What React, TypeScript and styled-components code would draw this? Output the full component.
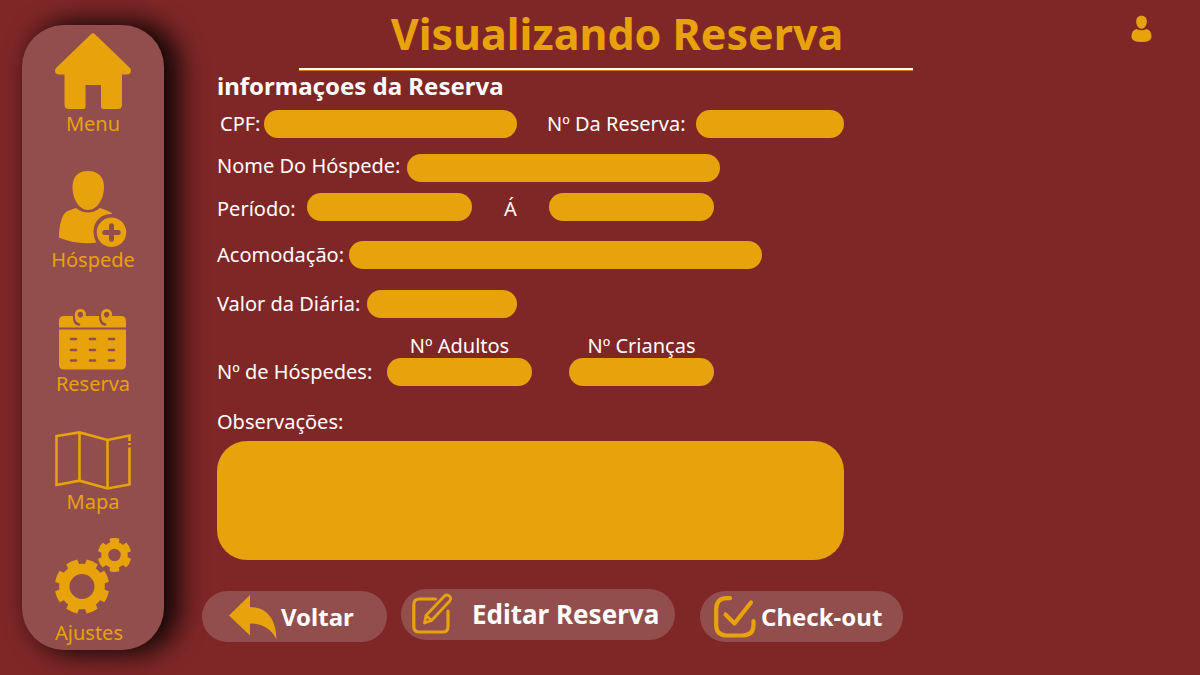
import React from "react";
import styled, { createGlobalStyle } from "styled-components";

const gold = "#e8a20c";
const wine = "#7f2727";
const rose = "#914e4c";

const GlobalStyle = createGlobalStyle`
  *, *::before, *::after { box-sizing: border-box; }
  body { margin: 0; background: ${wine}; }
  body, button, input, textarea { font-family: "Noto Sans", "Open Sans", sans-serif; }
`;

const Page = styled.div`
  display: flex;
  align-items: flex-start;
  min-height: 100vh;
  padding: 0 22px;
  color: #fff;
`;

const Sidebar = styled.nav`
  flex: 0 0 142px;
  display: flex;
  flex-direction: column;
  align-items: center;
  margin: 25px 0;
  padding: 8px 0 5px;
  border-radius: 42px;
  background: ${rose};
  box-shadow: 12px 0 26px 4px rgba(0, 0, 0, 0.85);
`;

const NavLink = styled.a<{ $above?: number; $gap?: number; $align?: string }>`
  display: flex;
  flex-direction: column;
  align-items: ${(p) => p.$align ?? "center"};
  gap: ${(p) => p.$gap ?? 0}px;
  margin-top: ${(p) => p.$above ?? 0}px;
  color: ${gold};
  font-size: 20px;
  line-height: 24px;
  text-decoration: none;

  svg { display: block; }
`;

const Main = styled.main`
  flex: 1;
  min-width: 0;
  padding-left: 38px;
`;

const Header = styled.header`
  display: flex;
  justify-content: space-between;
  align-items: flex-start;
`;

const Title = styled.h1`
  flex: 0 1 614px;
  margin: 0 0 0 97px;
  padding: 4px 0 4px 22px;
  border-bottom: 2px solid #fff;
  box-shadow: 0 1px 0 #e07a1c;
  font-size: 43px;
  line-height: 60px;
  font-weight: 700;
  text-align: center;
  white-space: nowrap;
  color: ${gold};
`;

const UserButton = styled.button`
  margin: 15px 26px 0 0;
  padding: 0;
  border: 0;
  background: none;
  color: ${gold};
  svg { display: block; }
`;

const Form = styled.form`
  max-width: 642px;
  padding-left: 15px;
`;

const SectionTitle = styled.h2`
  margin: 0 0 8px;
  font-size: 24px;
  line-height: 32px;
  font-weight: 700;
`;

const Row = styled.div<{ $above?: number; $align?: string }>`
  display: flex;
  align-items: ${(p) => p.$align ?? "center"};
  margin-top: ${(p) => p.$above ?? 0}px;
`;

const Label = styled.label<{ $width?: number; $indent?: number }>`
  flex: none;
  width: ${(p) => (p.$width ? p.$width + "px" : "auto")};
  padding-left: ${(p) => p.$indent ?? 0}px;
  font-size: 20px;
  line-height: 24px;
  white-space: nowrap;
`;

const GroupName = styled.span`
  flex: none;
  width: 170px;
  font-size: 20px;
  line-height: 28px;
  white-space: nowrap;
`;

const Pill = styled.input<{ $width: number }>`
  width: ${(p) => p.$width}px;
  min-width: 0;
  height: 28px;
  padding: 0 14px;
  border: 0;
  border-radius: 14px;
  background: ${gold};
  color: #fff;
  font-size: 16px;
`;

const Group = styled.div`
  display: flex;
  gap: 37px;
`;

const Stack = styled.div`
  display: flex;
  flex-direction: column;
  align-items: center;
  min-width: 0;
`;

const Notes = styled.textarea`
  display: block;
  width: 100%;
  height: 119px;
  margin-top: 7px;
  padding: 16px 24px;
  border: 0;
  border-radius: 30px;
  background: ${gold};
  color: #fff;
  font-size: 16px;
  resize: none;
`;

const Actions = styled.div`
  display: flex;
  align-items: flex-end;
  height: 53px;
  margin-top: 29px;
`;

const Action = styled.button<{ $width: number; $before?: number; $gap: number; $left: number }>`
  display: flex;
  align-items: center;
  gap: ${(p) => p.$gap}px;
  width: ${(p) => p.$width}px;
  height: 51px;
  margin-left: ${(p) => p.$before ?? 0}px;
  padding: 0 0 0 ${(p) => p.$left}px;
  border: 0;
  border-radius: 26px;
  background: ${rose};
  color: #fff;
  font-size: 24px;
  line-height: 32px;
  font-weight: 700;
  white-space: nowrap;

  svg {
    flex: none;
    color: ${gold};
  }
`;

const MainAction = styled(Action)`
  align-self: flex-start;
  padding-bottom: 2px;
  font-size: 26px;
`;

const HomeIcon = () => (
  <svg width="76" height="76" viewBox="0 0 76 76" fill="currentColor" aria-hidden="true">
    <path d="M36 1.200Q38-.8 40 1.200L75 35Q77 38 75 40.500Q74 41.500 72 41.500H67V71.500Q67 76 62.500 76H48Q46 76 46 74V52H30.500V74Q30.500 76 28.500 76H14Q9.500 76 9.500 71.500V41.500H4Q2 41.500 1 40.500Q-1 38 1 35Z" />
  </svg>
);

const GuestIcon = () => (
  <svg width="68" height="77" viewBox="0 0 68 77" fill="currentColor" aria-hidden="true">
    <path d="M29 0C39 0 45 6 45 16C45 28 38 39 29 39S13.500 28 13.500 16C13.500 6 19 0 29 0Z" />
    <path d="M17 37Q29 46 41 37L49 40Q52 41 53.500 43C42 42.500 35 50 34.500 60Q34.500 67 37.500 71.500C24 73.500 10 71 0 66.500C0 54 3 44 7 41Q9 39.500 17 37Z" />
    <path fillRule="evenodd" d="M52.500 46.500a14.800 14.800 0 1 0 .01 0ZM52.500 52.200q2.500 0 2.500 2.500v4.300h4.200q2.500 0 2.500 2.500t-2.500 2.500h-4.200v4.300q0 2.500-2.500 2.500t-2.500-2.500v-4.300h-4.200q-2.500 0-2.500-2.500t2.500-2.500h4.200v-4.300q0-2.500 2.500-2.500Z" />
  </svg>
);

const CalendarIcon = () => (
  <svg width="68" height="61" viewBox="0 0 68 61" aria-hidden="true">
    <path fill="currentColor" d="M5 7H62Q67 7 67 12V18.500H0V12Q0 7 5 7ZM0 20.500H67V55.500Q67 60.500 62 60.500H5Q0 60.500 0 55.500Z" />
    <g fill="none" strokeLinecap="round">
      {[0, 26.2].map((x) => (
        <g key={x} transform={`translate(${x} 0)`}>
          <path stroke={rose} strokeWidth="2.600" d="M15.200 6.500C14.800 12.500 16.500 15 20 15.500" />
          <path stroke="currentColor" strokeWidth="2.800" d="M18.500 11.500C17 9.500 17.300 7.500 17.300 5.500C17.500 0 25.500 0 25.500 5.500V8" />
          <path stroke={rose} strokeWidth="4" d="M21.400 5V6.800" />
        </g>
      ))}
      {[30, 41, 51.5].map((y) => (
        <path key={y} stroke={rose} strokeWidth="2.600" d={`M12 ${y}h5M31 ${y}h5M50 ${y}h5`} />
      ))}
    </g>
  </svg>
);

const MapIcon = () => (
  <svg width="76" height="59" viewBox="0 0 76 59" fill="none" stroke="currentColor" strokeWidth="2.600" aria-hidden="true">
    <path d="M74.500 10V4.500L52.500 9L24.500 1.400L1.500 5V54L24.500 49.700L52.500 57.500L74.500 53.500V16.500M24.500 1.400V49.700M52.500 9V57.500M74.500 12V14" />
  </svg>
);

const gear = (cx: number, cy: number, outer: number, inner: number, teeth: number, turn: number) => {
  const step = (Math.PI * 2) / teeth;
  const at = (r: number, a: number) =>
    `${(cx + r * Math.cos(a)).toFixed(2)} ${(cy + r * Math.sin(a)).toFixed(2)}`;
  let d = "";
  for (let i = 0; i < teeth; i++) {
    const a = turn + i * step;
    d += `${i ? "L" : "M"}${at(inner, a - step * 0.33)}L${at(outer, a - step * 0.28)}`;
    d += `A${outer} ${outer} 0 0 1 ${at(outer, a + step * 0.28)}L${at(inner, a + step * 0.33)}`;
    d += `A${inner} ${inner} 0 0 1 ${at(inner, a + step * 0.67)}`;
  }
  return d + "Z";
};

const hole = (cx: number, cy: number, r: number) =>
  `M${cx - r} ${cy}a${r} ${r} 0 1 0 ${2 * r} 0a${r} ${r} 0 1 0 ${-2 * r} 0Z`;

const GearsIcon = () => (
  <svg width="76" height="76" viewBox="0 0 76 76" fill="currentColor" fillRule="evenodd" aria-hidden="true">
    <path d={gear(27, 48.5, 27.3, 22.8, 8, Math.PI / 8) + hole(27, 48.5, 12.5)} />
    <path d={gear(59.5, 17, 17, 13.2, 6, Math.PI / 2) + hole(59.5, 17, 6.2)} />
  </svg>
);

const UserIcon = () => (
  <svg width="21" height="27" viewBox="0 0 21 27" fill="currentColor" aria-hidden="true">
    <path d="M10.500 .8C14 .8 15.800 3 15.800 6.500C15.800 10.500 13.500 13.700 10.500 13.700S5.200 10.500 5.200 6.500C5.200 3 7 .8 10.500 .8Z" />
    <path d="M5.500 14Q10.500 16.500 15.500 14Q20.500 15 20.500 22Q20.500 27 10.500 27T.5 22Q.5 15 5.500 14Z" />
  </svg>
);

const BackIcon = () => (
  <svg width="48" height="44" viewBox="0 0 48 44" fill="currentColor" aria-hidden="true">
    <path d="M0 20.500L21 0V12C36 12 47 22 47.500 44C42 34 34 28.500 21 28.500V40.500Z" />
  </svg>
);

const EditIcon = () => (
  <svg width="41" height="42" viewBox="0 0 41 42" fill="none" stroke="currentColor" strokeWidth="3.200" strokeLinecap="round" strokeLinejoin="round" aria-hidden="true">
    <path d="M23.500 6H7.500Q1.800 6 1.800 11.500V33.500Q1.800 39 7.500 39H30.500Q36 39 36 33.500V18" />
    <path strokeWidth="2.800" d="M12.500 30L14 22.500L32.500 3Q35 1 37.500 3.200Q40 5.500 37.500 8.200L19.500 27.500L12.500 30ZM14 22.500L19.500 27.500" />
  </svg>
);

const CheckIcon = () => (
  <svg width="42" height="42" viewBox="0 0 42 42" fill="none" stroke="currentColor" strokeWidth="4.200" strokeLinecap="round" strokeLinejoin="round" aria-hidden="true">
    <path d="M16 2.200H13Q2.200 2.200 2.200 13V29Q2.200 39.500 13 39.500H28Q39.500 39.500 39.500 29V25" />
    <path d="M11.500 18.500L20.500 27.500L37 6.500" />
  </svg>
);

export default function App() {
  return (
    <>
      <GlobalStyle />
      <Page>
        <Sidebar aria-label="Principal">
          <NavLink href="#menu" $gap={3}><HomeIcon />Menu</NavLink>
          <NavLink href="#hospede" $above={35}><GuestIcon />Hóspede</NavLink>
          <NavLink href="#reserva" $above={37} $gap={2}><CalendarIcon />Reserva</NavLink>
          <NavLink href="#mapa" $above={35}><MapIcon />Mapa</NavLink>
          <NavLink href="#ajustes" $above={24} $gap={7} $align="flex-start"><GearsIcon />Ajustes</NavLink>
        </Sidebar>
        <Main>
          <Header>
            <Title>Visualizando Reserva</Title>
            <UserButton type="button" aria-label="Usuário"><UserIcon /></UserButton>
          </Header>
          <Form>
            <SectionTitle>informaçoes da Reserva</SectionTitle>
            <Row>
              <Label htmlFor="cpf" $width={47} $indent={3}>CPF:</Label>
              <Pill id="cpf" $width={253} readOnly />
              <Label htmlFor="numero" $width={179} $indent={30}>Nº Da Reserva:</Label>
              <Pill id="numero" $width={148} readOnly />
            </Row>
            <Row $above={16} $align="flex-start">
              <Label htmlFor="nome" $width={190}>Nome Do Hóspede:</Label>
              <Pill id="nome" $width={313} readOnly />
            </Row>
            <Row $above={11} $align="flex-end">
              <Label htmlFor="inicio" $width={90}>Período:</Label>
              <Pill id="inicio" $width={165} readOnly />
              <Label htmlFor="fim" $width={77} $indent={32}>Á</Label>
              <Pill id="fim" $width={165} readOnly />
            </Row>
            <Row $above={20}>
              <Label htmlFor="acomodacao" $width={132}>Acomodação:</Label>
              <Pill id="acomodacao" $width={413} readOnly />
            </Row>
            <Row $above={21}>
              <Label htmlFor="diaria" $width={150}>Valor da Diária:</Label>
              <Pill id="diaria" $width={150} readOnly />
            </Row>
            <Row $above={16} $align="flex-end">
              <GroupName>Nº de Hóspedes:</GroupName>
              <Group>
                <Stack>
                  <Label htmlFor="adultos">Nº Adultos</Label>
                  <Pill id="adultos" $width={145} readOnly />
                </Stack>
                <Stack>
                  <Label htmlFor="criancas">Nº Crianças</Label>
                  <Pill id="criancas" $width={145} readOnly />
                </Stack>
              </Group>
            </Row>
            <Row $above={24}>
              <Label htmlFor="obs">Observações:</Label>
            </Row>
            <Notes id="obs" readOnly />
          </Form>
          <Actions>
            <Action type="button" $width={185} $left={27} $gap={4}><BackIcon />Voltar</Action>
            <MainAction type="button" $width={274} $before={14} $left={11} $gap={19}><EditIcon />Editar Reserva</MainAction>
            <Action type="button" $width={203} $before={25} $left={14} $gap={5}><CheckIcon />Check-out</Action>
          </Actions>
        </Main>
      </Page>
    </>
  );
}
